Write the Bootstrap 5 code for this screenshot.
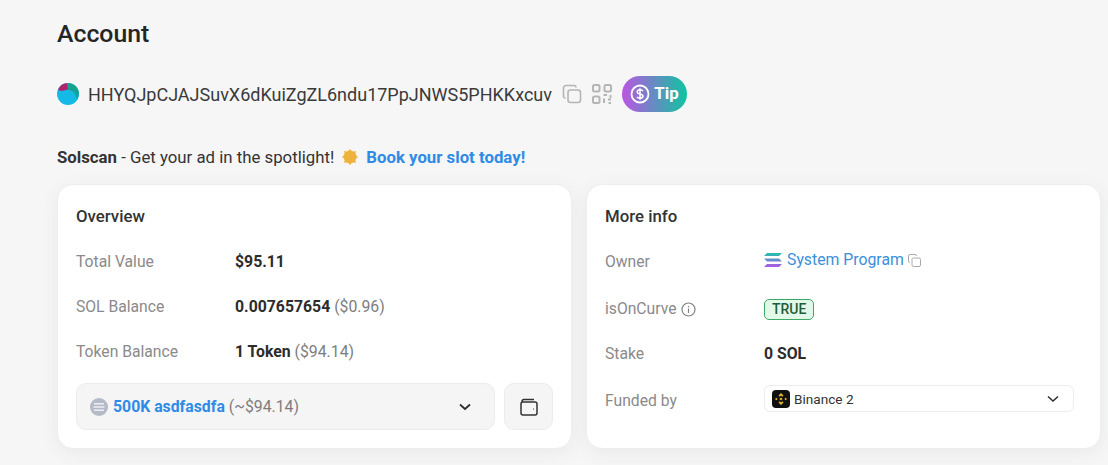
<!DOCTYPE html>
<html lang="en">
<head>
    <meta charset="UTF-8">
    <meta name="viewport" content="width=device-width, initial-scale=1.0">
    <title>Account</title>
    <link href="https://cdn.jsdelivr.net/npm/bootstrap@5.3.2/dist/css/bootstrap.min.css" rel="stylesheet">
    <style>
        html, body { height: 465px; overflow: hidden; }
        body { background: #f6f6f6; font-family: Roboto, "Liberation Sans", sans-serif; color: #2c2c2c; font-size: 15px; }
        .page-wrap { padding: 18px 7px 0 57px; }
        .page-title { font-size: 24.8px; font-weight: 500; line-height: 32px; margin: 0; color: #252525; }
        .addr-row { height: 40px; margin-top: 24px; }
        .addr-text { font-size: 18px; color: #3a3a3a; margin-left: 9px; }
        .addr-icon { margin-left: 10px; }
        .tip-btn { height: 36px; width: 65px; border-radius: 18px; background: linear-gradient(90deg, #bb55e2, #0fc4a0); color: #fff; font-weight: 700; font-size: 16.8px; gap: 4px; margin-left: 10px; }
        .ad-row { margin-top: 32px; font-size: 16.8px; line-height: 22px; color: #333; }
        .ad-row a { color: #2f8be6; font-weight: 700; text-decoration: none; }
        .sun-wrap { margin: 0 7px; }
        .cards-row { margin-top: 16px; gap: 14px; }
        .info-card { flex: 0 0 515px; height: 265px; background: #fff; border: 1px solid #eeeeef; border-radius: 16px; padding: 20px 18px 0; box-shadow: 0 4px 18px rgba(60, 70, 100, .07); }
        .card-head { font-size: 16.8px; font-weight: 500; line-height: 22px; margin-bottom: 24px; color: #333; }
        .info-line { height: 45px; line-height: 22px; }
        .owner-line { height: 47px; }
        .stake-line { height: 42px; }
        .info-label { flex: 0 0 159px; color: #8a8a8a; font-size: 15.7px; }
        .funded-label { padding-top: 5px; }
        .info-val { font-size: 15.8px; }
        .info-val b { font-weight: 700; }
        .muted-val { color: #7d7d7d; }
        .token-wrap { margin-top: -3px; }
        .token-select { flex: 1; height: 47px; background: #f5f5f5; border: 1px solid #ececec; border-radius: 10px; padding: 0 23px 0 13px; }
        .token-select a { color: #2f8be6; font-weight: 700; text-decoration: none; }
        .token-name { margin-left: 1px; }
        .wallet-btn { width: 49px; height: 47px; background: #f5f5f5; border: 1px solid #ececec; border-radius: 10px; margin-left: 9px; }
        .owner-box { height: 18px; }
        .sys-link { color: #3b8fdc; text-decoration: none; font-size: 15.8px; margin-left: 5px; }
        .true-tag { border: 1px solid #3ea869; background: #e2f8e9; color: #1f5f38; border-radius: 5px; font-size: 14px; font-weight: 500; line-height: 19px; padding: 0 7px; }
        .funded-select { width: 310px; height: 27px; border: 1px solid #ececec; border-radius: 6px; padding: 0 14px 0 7px; font-size: 13.6px; color: #333; }
    </style>
</head>
<body>
    <div class="page-wrap">
        <h1 class="page-title">Account</h1>

        <div class="addr-row d-flex align-items-center">
            <svg width="22" height="22" viewBox="0 0 22 22">
                <circle cx="11" cy="11" r="11" fill="#14b9e8"/>
                <path d="M10 .1 A11 11 0 0 1 21.9 10 L20.5 17 L17 9 L11 6.5 Z" fill="#16a28c"/>
                <path d="M.9 7 A11 11 0 0 1 10 .1 L11 6.5 L5 8 Z" fill="#b0246e"/>
            </svg>
            <span class="addr-text">HHYQJpCJAJSuvX6dKuiZgZL6ndu17PpJNWS5PHKKxcuv</span>
            <svg class="addr-icon" width="20" height="20" viewBox="0 0 20 20" fill="none" stroke="#b5b5b5" stroke-width="1.6">
                <rect x="6" y="6" width="12.5" height="12.5" rx="2.5"/>
                <path d="M3.5 14 A2 2 0 0 1 1.5 12 V4 A2.5 2.5 0 0 1 4 1.5 H12 A2 2 0 0 1 14 3.5"/>
            </svg>
            <svg class="addr-icon" width="20" height="20" viewBox="0 0 20 20" fill="none" stroke="#b5b5b5" stroke-width="2">
                <rect x="1" y="1" width="6.5" height="6.5" rx="1.5"/>
                <rect x="12.5" y="1" width="6.5" height="6.5" rx="1.5"/>
                <rect x="1" y="12.5" width="6.5" height="6.5" rx="1.5"/>
                <path d="M11.5 11 H15 M18.5 11 V14 M12 14.5 V19 M16 15.5 H19 M16.5 19 H19"/>
            </svg>
            <div class="tip-btn d-flex align-items-center justify-content-center">
                <svg width="20" height="20" viewBox="0 0 20 20">
                    <circle cx="10" cy="10" r="8.5" fill="none" stroke="#fff" stroke-width="1.8"/>
                    <path d="M13 7.2 C12.4 6 11 5.8 10 5.8 C8.5 5.8 7.2 6.6 7.2 7.9 C7.2 10.6 13 9.4 13 12.1 C13 13.4 11.6 14.2 10 14.2 C8.8 14.2 7.5 13.8 7 12.8 M10 4.2 V15.8" fill="none" stroke="#fff" stroke-width="1.5"/>
                </svg>
                <span>Tip</span>
            </div>
        </div>

        <div class="ad-row d-flex align-items-center">
            <span><b class="fw-bold">Solscan</b> - Get your ad in the spotlight!</span>
            <span class="sun-wrap d-inline-flex">
                <svg width="18" height="18" viewBox="0 0 18 18">
                    <circle cx="9" cy="9" r="6.4" fill="#eeb33c"/>
                    <path d="M9 .8 L11 4 H7 Z M9 17.2 L11 14 H7 Z M.8 9 L4 7 V11 Z M17.2 9 L14 7 V11 Z M3 3 L6.8 4 L4 6.8 Z M15 3 L11.2 4 L14 6.8 Z M3 15 L6.8 14 L4 11.2 Z M15 15 L11.2 14 L14 11.2 Z" fill="#eeb33c"/>
                </svg>
            </span>
            <a href="#">Book your slot today!</a>
        </div>

        <div class="cards-row d-flex">
            <div class="info-card">
                <div class="card-head">Overview</div>
                <div class="info-line d-flex">
                    <div class="info-label">Total Value</div>
                    <div class="info-val"><b>$95.11</b></div>
                </div>
                <div class="info-line d-flex">
                    <div class="info-label">SOL Balance</div>
                    <div class="info-val"><b>0.007657654</b> <span class="muted-val">($0.96)</span></div>
                </div>
                <div class="info-line d-flex">
                    <div class="info-label">Token Balance</div>
                    <div class="info-val"><b>1 Token</b> <span class="muted-val">($94.14)</span></div>
                </div>
                <div class="token-wrap d-flex">
                    <div class="token-select d-flex align-items-center">
                        <svg width="18" height="18" viewBox="0 0 18 18" class="me-1">
                            <circle cx="9" cy="9" r="9" fill="#b4bac6"/>
                            <path d="M4 5.8 H14 M3.5 9 H14.5 M4 12.2 H14" stroke="#eef0f3" stroke-width="1.6"/>
                        </svg>
                        <span class="info-val token-name"><a href="#">500K asdfasdfa</a> <span class="muted-val">(~$94.14)</span></span>
                        <svg class="ms-auto" width="12" height="8" viewBox="0 0 12 8" fill="none" stroke="#2c2c2c" stroke-width="1.7">
                            <path d="M1 1.5 L6 6 L11 1.5"/>
                        </svg>
                    </div>
                    <div class="wallet-btn d-flex align-items-center justify-content-center">
                        <svg width="18" height="18" viewBox="0 0 18 18" fill="none" stroke="#333" stroke-width="1.5">
                            <path d="M2 4 A2 2 0 0 1 4 1.5 H14"/>
                            <rect x="1" y="4" width="16" height="13" rx="2"/>
                            <path d="M13 11 h.6"/>
                        </svg>
                    </div>
                </div>
            </div>

            <div class="info-card">
                <div class="card-head">More info</div>
                <div class="info-line owner-line d-flex">
                    <div class="info-label">Owner</div>
                    <div class="owner-box d-flex align-items-center">
                        <svg width="18" height="14" viewBox="0 0 18 14">
                            <defs><linearGradient id="solGrad" x1="0" y1="0" x2="0" y2="1"><stop offset="0" stop-color="#1fc2b0"/><stop offset="1" stop-color="#b057e6"/></linearGradient></defs>
                            <path d="M3 0 H18 L15 3 H0 Z M0 5.5 H15 L18 8.5 H3 Z M3 11 H18 L15 14 H0 Z" fill="url(#solGrad)"/>
                        </svg>
                        <a class="sys-link" href="#">System Program</a>
                        <svg class="ms-1" width="13" height="13" viewBox="0 0 13 13" fill="none" stroke="#aaa" stroke-width="1">
                            <rect x="4" y="4" width="8.5" height="8.5" rx="1.5"/>
                            <path d="M2 8.5 A1.5 1.5 0 0 1 .5 7 V2 A1.5 1.5 0 0 1 2 .5 H7 A1.5 1.5 0 0 1 8.5 2"/>
                        </svg>
                    </div>
                </div>
                <div class="info-line d-flex">
                    <div class="info-label d-flex align-items-center align-self-start gap-1">isOnCurve
                        <svg width="15" height="15" viewBox="0 0 15 15" fill="none" stroke="#808080" stroke-width="1.2">
                            <circle cx="7.5" cy="7.5" r="6.5"/>
                            <path d="M7.5 6.5 V11 M7.5 4 V5.2"/>
                        </svg>
                    </div>
                    <div><span class="true-tag d-inline-block">TRUE</span></div>
                </div>
                <div class="info-line stake-line d-flex">
                    <div class="info-label">Stake</div>
                    <div class="info-val"><b>0 SOL</b></div>
                </div>
                <div class="info-line d-flex">
                    <div class="info-label funded-label">Funded by</div>
                    <div class="funded-select d-flex align-items-center">
                        <svg width="18" height="18" viewBox="0 0 18 18" class="me-1">
                            <rect width="18" height="18" rx="4" fill="#111"/>
                            <path d="M9 3 L11.5 5.5 L10.3 6.7 L9 5.4 L7.7 6.7 L6.5 5.5 Z M9 15 L6.5 12.5 L7.7 11.3 L9 12.6 L10.3 11.3 L11.5 12.5 Z M3 9 L4.3 7.7 L5.6 9 L4.3 10.3 Z M12.4 9 L13.7 7.7 L15 9 L13.7 10.3 Z M9 7.4 L10.6 9 L9 10.6 L7.4 9 Z" fill="#e8b92f"/>
                        </svg>
                        <span>Binance 2</span>
                        <svg class="ms-auto" width="12" height="8" viewBox="0 0 12 8" fill="none" stroke="#2c2c2c" stroke-width="1.5">
                            <path d="M1 1.5 L6 6 L11 1.5"/>
                        </svg>
                    </div>
                </div>
            </div>
        </div>
    </div>
    <script src="https://cdn.jsdelivr.net/npm/bootstrap@5.3.2/dist/js/bootstrap.bundle.min.js"></script>
</body>
</html>
